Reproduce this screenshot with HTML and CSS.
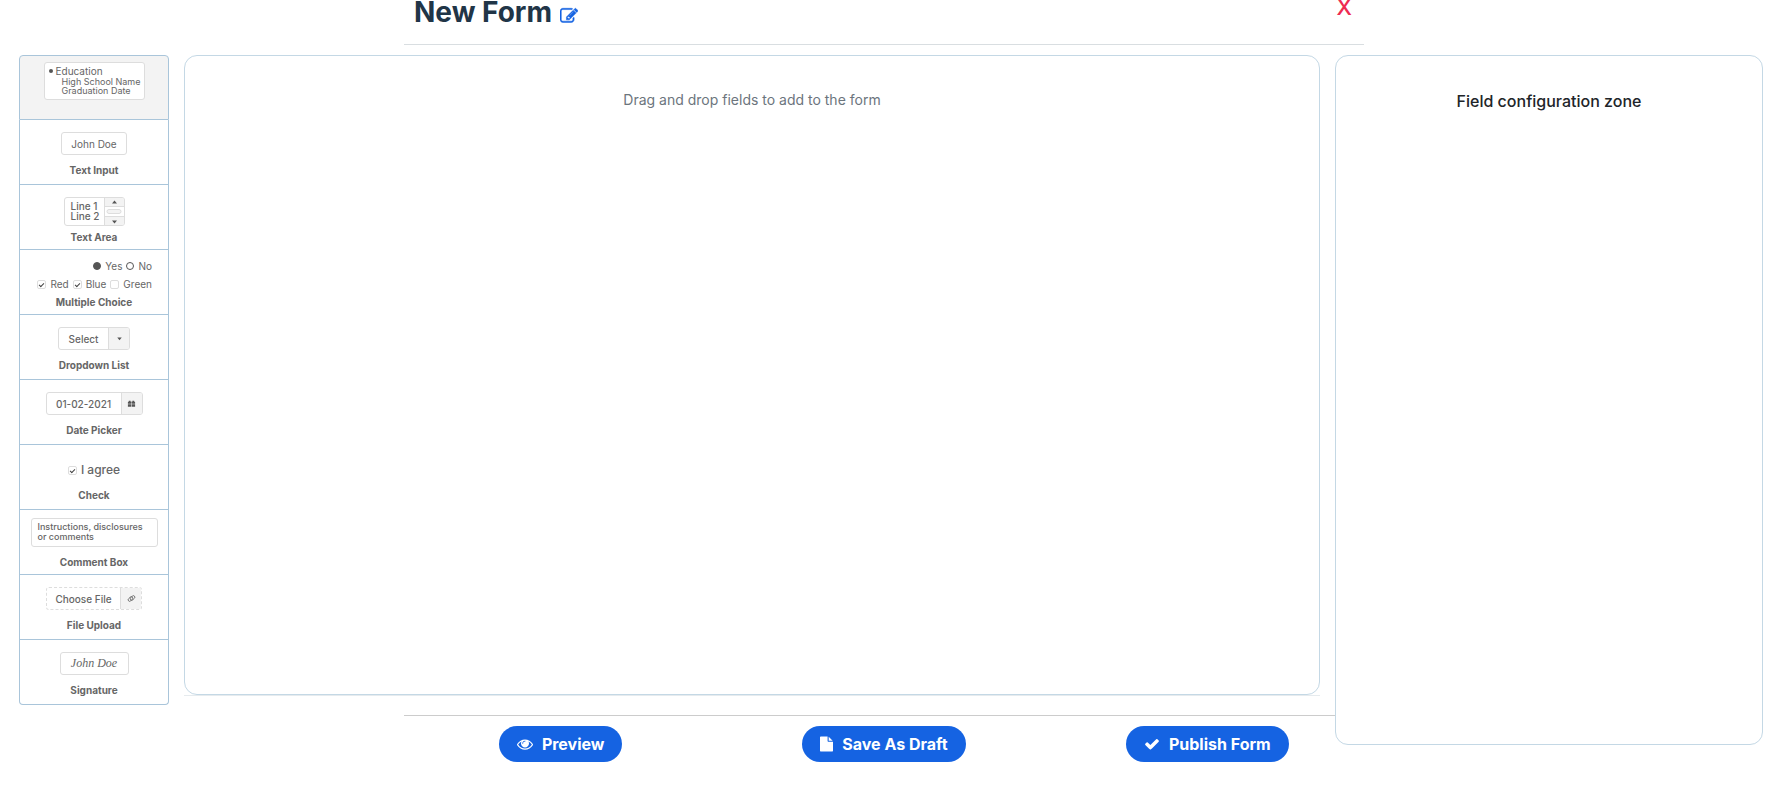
FILE: index.html
```html
<!DOCTYPE html>
<html lang="en">
<head>
    <meta charset="UTF-8">
    <meta name="viewport" content="width=device-width, initial-scale=1.0">
    <title>New Form</title>
    <link rel="stylesheet" href="styles.css">
</head>
<body>
    <header class="form-header">
        <h1>New Form</h1>
        <button type="button" class="edit-btn" aria-label="Edit form name">
            <svg viewBox="0 0 1792 1792"><path d="M888 1184l116-116-152-152-116 116v56h96v96h56zm440-720q-16-16-33 1l-350 350q-17 17-1 33t33-1l350-350q17-17 1-33zm80 594v190q0 119-84.5 203.5t-203.5 84.5h-832q-119 0-203.5-84.5t-84.5-203.5v-832q0-119 84.5-203.5t203.5-84.5h832q63 0 117 25 15 7 18 23 3 17-9 29l-49 49q-14 14-32 8-23-6-45-6h-832q-66 0-113 47t-47 113v832q0 66 47 113t113 47h832q66 0 113-47t47-113v-126q0-13 9-22l64-64q15-15 35-7t20 29zm-96-738l288 288-672 672h-288v-288zm444 132l-92 92-288-288 92-92q28-28 68-28t68 28l152 152q28 28 28 68t-28 68z"/></svg>
        </button>
        <button type="button" class="close-btn">X</button>
    </header>

    <main class="builder">
        <!-- Draggable field types -->
        <ul class="field-list">
            <li class="field active" draggable="true">
                <div class="box section-box">
                    <p class="section-title">Education</p>
                    <p>High School Name</p>
                    <p>Graduation Date</p>
                </div>
            </li>
            <li class="field" draggable="true">
                <input type="text" class="box text-box" id="f-text" value="John Doe" readonly>
                <label for="f-text">Text Input</label>
            </li>
            <li class="field tall" draggable="true">
                <div class="box area-box">
                    <textarea id="f-area" readonly>Line 1
Line 2</textarea>
                    <svg class="scroller" viewBox="0 0 20 27">
                        <path fill="#f3f3f3" d="M0 0h20v8H0zM0 19h20v8H0z"/>
                        <path stroke="#ddd" d="M.5 0v27M0 8.5h20M0 18.5h20"/>
                        <rect x="3" y="11.5" width="14" height="4" rx="2" fill="#f3f3f3" stroke="#ddd"/>
                        <path fill="#555" d="M8 5.5h5L10.5 2.500zM8 22.500h5l-2.500 3z"/>
                    </svg>
                </div>
                <label for="f-area">Text Area</label>
            </li>
            <li class="field tall" draggable="true">
                <div class="choices">
                    <label><input type="radio" name="answer" checked> Yes</label>
                    <label><input type="radio" name="answer"> No</label>
                </div>
                <div class="choices">
                    <label><input type="checkbox" checked> Red</label>
                    <label><input type="checkbox" checked> Blue</label>
                    <label><input type="checkbox"> Green</label>
                </div>
                <p class="field-name">Multiple Choice</p>
            </li>
            <li class="field" draggable="true">
                <div class="box select-box">
                    <select id="f-select"><option>Select</option></select>
                    <span class="addon"><svg viewBox="0 0 10 10"><path d="M2.5 4h5L5 7z"/></svg></span>
                </div>
                <label for="f-select">Dropdown List</label>
            </li>
            <li class="field" draggable="true">
                <div class="box date-box">
                    <input type="text" id="f-date" value="01-02-2021" readonly>
                    <span class="addon"><svg viewBox="0 0 10 10"><path d="M2 2h2v1h2V2h2v1h1v2.200H5.300V3.500h-.6v1.700H1V3h1zM1 5.800h3.700v2.700H1zM5.300 5.800H9v2.700H5.300z"/></svg></span>
                </div>
                <label for="f-date">Date Picker</label>
            </li>
            <li class="field" draggable="true">
                <label class="agree"><input type="checkbox" checked> I agree</label>
                <p class="field-name">Check</p>
            </li>
            <li class="field tall comment" draggable="true">
                <div class="box comment-box">Instructions, disclosures<br>or comments</div>
                <p class="field-name">Comment Box</p>
            </li>
            <li class="field" draggable="true">
                <div class="box file-box">
                    <button type="button">Choose File</button>
                    <span class="addon"><svg class="link-icon" viewBox="0 0 12 12"><g transform="rotate(-45 6 6)"><rect x="1" y="3.500" width="7" height="4" rx="2"/><rect x="4" y="4.500" width="7" height="4" rx="2"/></g></svg></span>
                </div>
                <p class="field-name">File Upload</p>
            </li>
            <li class="field" draggable="true">
                <input type="text" class="box sign-box" id="f-sign" value="John Doe" readonly>
                <label for="f-sign">Signature</label>
            </li>
        </ul>

        <section class="drop-zone">
            <div class="drop-area">Drag and drop fields to add to the form</div>
        </section>

        <aside class="config">Field configuration zone</aside>
    </main>

    <footer class="form-footer">
        <div class="actions">
            <button type="button" class="btn">
                <svg viewBox="0 0 1792 1792"><path d="M1664 960q-152-236-381-353 61 104 61 225 0 185-131.5 316.5t-316.5 131.5-316.5-131.5-131.5-316.5q0-121 61-225-229 117-381 353 133 205 333.5 326.5t434.5 121.5 434.5-121.5 333.5-326.5zm-720-384q0-20-14-34t-34-14q-125 0-214.5 89.5t-89.5 214.5q0 20 14 34t34 14 34-14 14-34q0-86 61-147t147-61q20 0 34-14t14-34zm848 384q0 34-20 69-140 230-376.5 368.5t-499.5 138.5-499.5-139-376.5-368q-20-35-20-69t20-69q140-229 376.5-368t499.5-139 499.5 139 376.5 368q20 35 20 69z"/></svg>
                Preview
            </button>
            <button type="button" class="btn">
                <svg class="narrow" viewBox="128 0 1536 1792"><path d="M1152 512v-472q22 14 36 28l408 408q14 14 28 36h-472zm-128 32q0 40 28 68t68 28h544v1056q0 40-28 68t-68 28h-1344q-40 0-68-28t-28-68v-1600q0-40 28-68t68-28h800v544z"/></svg>
                Save As Draft
            </button>
            <button type="button" class="btn">
                <svg viewBox="0 0 1792 1792"><path d="M1671 566q0 40-28 68l-724 724-136 136q-28 28-68 28t-68-28l-136-136-362-362q-28-28-28-68t28-68l136-136q28-28 68-28t68 28l294 295 656-657q28-28 68-28t68 28l136 136q28 28 28 68z"/></svg>
                Publish Form
            </button>
        </div>
    </footer>
</body>
</html>
```
FILE: styles.css
```css
* {
    margin: 0;
    padding: 0;
    box-sizing: border-box;
}

body {
    padding-right: 9px;
    background-color: #fff;
    color: #212529;
    font-family: Inter, "Liberation Sans", sans-serif;
    font-size: 16px;
}

button, input, select, textarea {
    font: inherit;
    color: inherit;
    border: none;
    background: none;
    outline: none;
}

button {
    cursor: pointer;
}

.form-header {
    display: flex;
    align-items: flex-start;
    width: 100%;
    max-width: 960px;
    height: 45px;
    margin: 0 auto;
    padding: 0 12px 0 10px;
    border-bottom: 1px solid #d9dee1;
}

.form-header h1 {
    font-size: 28px;
    line-height: 24px;
    font-weight: 700;
    color: #213547;
}

.edit-btn {
    margin: 7px 0 0 8px;
    height: 18px;
}

.edit-btn svg {
    display: block;
    width: 18px;
    height: 18px;
    fill: #1563e2;
    stroke: #1563e2;
    stroke-width: 50px;
}

.close-btn {
    margin-left: auto;
    font-size: 22px;
    line-height: 14px;
    font-weight: 500;
    color: #ee2b52;
}

.builder {
    display: flex;
    align-items: flex-start;
    gap: 15px;
    margin: 10px 5px 0 19px;
}

/* Left column */
.field-list {
    flex: none;
    width: 150px;
    list-style: none;
    color: #666;
    font-size: 10px;
    line-height: 12px;
}

.field {
    display: flex;
    flex-direction: column;
    align-items: center;
    justify-content: space-between;
    height: 65px;
    padding: 12px 0 8px;
    border: 1px solid #a9c5da;
    border-top: none;
    cursor: move;
}

.field:first-child {
    border-top: 1px solid #a9c5da;
    border-radius: 4px 4px 0 0;
}

.field:last-child {
    border-radius: 0 0 4px 4px;
}

.field.active {
    padding-top: 6px;
    background-color: #f3f3f3;
}

.field.tall {
    padding-bottom: 6px;
}

.field.comment {
    padding-top: 8px;
}

.field > label, .field-name {
    font-weight: 700;
}

.box {
    display: flex;
    height: 23px;
    border: 1px solid #ddd;
    border-radius: 3px;
    background-color: #fff;
    font-weight: 500;
    text-align: center;
    overflow: hidden;
}

.box input, .box select, .box button {
    flex: 1;
    min-width: 0;
    text-align: center;
    appearance: none;
}

.addon {
    display: flex;
    align-items: center;
    justify-content: center;
    width: 21px;
    border-left: 1px solid #ddd;
    background-color: #f3f3f3;
}

.addon svg {
    width: 9px;
    height: 9px;
    fill: #555;
}

.addon .link-icon {
    fill: none;
    stroke: #555;
}

.section-box {
    flex-direction: column;
    width: 101px;
    height: 38px;
    padding: 2px 0 0 17px;
    font-size: 9px;
    line-height: 9px;
    font-weight: 400;
    text-align: left;
}

.section-box .section-title {
    margin-left: -6px;
    font-size: 10px;
    line-height: 12px;
}

.section-title::before {
    content: "";
    float: left;
    width: 4px;
    height: 4px;
    margin: 4px 0 0 -7px;
    border-radius: 50%;
    background-color: #555;
}

.text-box {
    width: 66px;
    font-weight: 400;
}

.area-box {
    width: 61px;
    height: 29px;
}

.area-box textarea {
    flex: 1;
    min-width: 0;
    padding: 3px 0 0 6px;
    line-height: 10px;
    resize: none;
    overflow: hidden;
}

.scroller {
    width: 20px;
    height: 27px;
    fill: none;
}

.choices {
    display: flex;
    justify-content: flex-end;
    gap: 4px;
    width: 100%;
    padding-right: 16px;
}

.choices:first-child {
    margin-top: -2px;
}

.choices label, .agree {
    display: flex;
    align-items: center;
    gap: 4px;
}

input[type="radio"], input[type="checkbox"] {
    display: flex;
    align-items: center;
    justify-content: center;
    width: 9px;
    height: 9px;
    appearance: none;
}

input[type="radio"] {
    width: 8px;
    height: 8px;
    border: 1px solid #555;
    border-radius: 50%;
}

input[type="radio"]:checked {
    background-color: #555;
}

input[type="checkbox"] {
    border: 1px solid #ddd;
    border-radius: 2px;
}

input[type="checkbox"]:checked::before {
    content: "";
    width: 4px;
    height: 2px;
    border: solid #444;
    border-width: 0 0 1px 1px;
    transform: rotate(-45deg);
}

.select-box {
    width: 72px;
}

.date-box {
    width: 97px;
}

.field > .agree {
    margin-top: 7px;
    font-size: 12px;
    font-weight: 500;
}

.comment-box {
    display: block;
    width: 127px;
    height: 29px;
    padding: 3px 0 0 6px;
    font-size: 9px;
    line-height: 10px;
    text-align: left;
    white-space: nowrap;
}

.file-box {
    width: 96px;
    border-style: dashed;
}

.sign-box {
    width: 69px;
    font-family: "Liberation Serif", cursive;
    font-size: 12px;
    font-style: italic;
}

/* Middle and right columns */
.drop-zone {
    flex: 1;
    border-bottom: 1px solid #e6ebee;
}

.drop-area {
    height: 640px;
    padding: 33px 20px;
    border: 1px solid #c4d8e5;
    border-radius: 13px;
    color: #6c757d;
    font-size: 14px;
    line-height: 21px;
    text-align: center;
}

.config {
    position: relative;
    z-index: 1;
    flex: none;
    width: 428px;
    height: 690px;
    margin-bottom: -40px;
    padding: 33px 20px;
    border: 1px solid #c4d8e5;
    border-radius: 13px;
    background-color: #fff;
    font-weight: 500;
    line-height: 24px;
    text-align: center;
}

/* Bottom buttons */
.form-footer {
    width: 100%;
    max-width: 960px;
    margin: 10px auto 0;
    border-top: 1px solid #ccc;
}

.actions {
    display: grid;
    grid-template-columns: repeat(3, 1fr);
    justify-items: center;
    margin: 0 -5px;
    padding: 10px 0;
}

.btn {
    display: flex;
    align-items: center;
    gap: 9px;
    height: 36px;
    padding: 0 18px;
    border-radius: 18px;
    background-color: #1563e2;
    color: #fff;
    font-weight: 700;
}

.btn svg {
    width: 16px;
    height: 16px;
    fill: #fff;
}

.btn .narrow {
    width: 13px;
}
```
